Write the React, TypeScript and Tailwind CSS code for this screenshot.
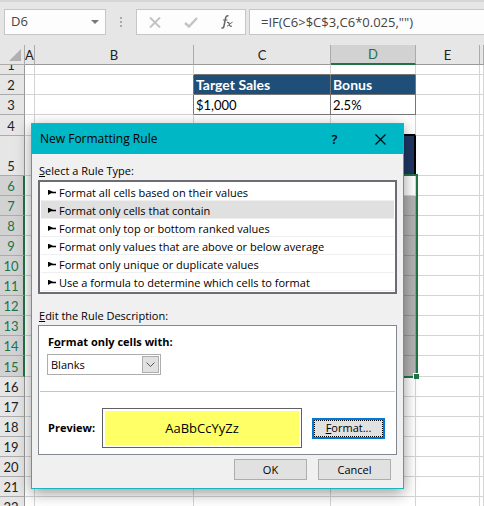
import type { ReactNode } from "react";

type RowSpec = { n: number; height: string };

const rows: RowSpec[] = [
  { n: 1, height: "h-[10px]" },
  { n: 2, height: "h-5" },
  { n: 3, height: "h-5" },
  { n: 4, height: "h-[21px]" },
  { n: 5, height: "h-10" },
  { n: 6, height: "h-5" },
  { n: 7, height: "h-5" },
  { n: 8, height: "h-5" },
  { n: 9, height: "h-5" },
  { n: 10, height: "h-5" },
  { n: 11, height: "h-5" },
  { n: 12, height: "h-5" },
  { n: 13, height: "h-5" },
  { n: 14, height: "h-5" },
  { n: 15, height: "h-[21px]" },
  { n: 16, height: "h-5" },
  { n: 17, height: "h-5" },
  { n: 18, height: "h-5" },
  { n: 19, height: "h-5" },
  { n: 20, height: "h-5" },
  { n: 21, height: "h-5" },
  { n: 22, height: "h-5" },
];

const columns = ["A", "B", "C", "D", "E", ""];

const ruleTypes = [
  "Format all cells based on their values",
  "Format only cells that contain",
  "Format only top or bottom ranked values",
  "Format only values that are above or below average",
  "Format only unique or duplicate values",
  "Use a formula to determine which cells to format",
];

const data: Record<string, string> = {
  C2: "Target Sales",
  D2: "Bonus",
  C3: "$1,000",
  D3: "2.5%",
};

function isSelected(n: number) {
  return n >= 6 && n <= 15;
}

function cellClass(col: string, n: number) {
  if (n === 1 && (col === "C" || col === "D")) return "border-r-[#d4d4d4] border-b-[#767676]";
  if (col === "B" && (n === 2 || n === 3)) return "border-r-[#767676] border-b-[#d4d4d4]";
  if (col === "C" || col === "D") {
    if (n === 2) return "border-[#767676] bg-[#1f4e78] text-[14px] leading-4 font-bold text-white";
    if (n === 3) return "border-[#767676]";
  }
  if (col === "D") {
    if (n === 4) return "border-b-2 border-r-[#d4d4d4] border-b-black";
    if (n === 5) return "border-r-2 border-r-black border-b-[#217346] bg-[#203764]";
    if (n > 6 && n <= 15) return "border-[#969696] bg-[#b4b4b4]";
  }
  return "border-[#d4d4d4]";
}

function FormulaBar() {
  return (
    <div className="flex items-center border-t-2 border-[#d6d6d6] pt-[7px] pb-[10px] pl-1 font-['Open_Sans',sans-serif] text-[13px] text-[#444]">
      <div className="flex h-[26px] w-[102px] items-center border border-[#c6c6c6] bg-[#fdfdfd]">
        <input aria-label="Name box" defaultValue="D6" className="w-20 bg-transparent pl-1.5 outline-none" />
        <button type="button" aria-label="Names" className="flex h-full flex-1 items-center justify-center">
          <svg width="8" height="4" viewBox="0 0 8 4" aria-hidden>
            <path d="M0 0h8L4 4z" fill="#777" />
          </svg>
        </button>
      </div>
      <svg className="mx-[14px]" width="2" height="10" viewBox="0 0 2 10" fill="#aaa" aria-hidden>
        <path d="M0 0h2v2H0zM0 4h2v2H0zM0 8h2v2H0z" />
      </svg>
      <div className="flex h-[26px] w-[110px] shrink-0 items-center justify-between border border-[#c6c6c6] bg-[#fdfdfd] px-3">
        <button type="button" aria-label="Cancel entry">
          <svg width="12" height="11" viewBox="0 0 12 11" fill="none" stroke="#c3c3c3" strokeWidth="2" aria-hidden>
            <path d="M1 .5l10 10M11 .5l-10 10" />
          </svg>
        </button>
        <button type="button" aria-label="Enter">
          <svg width="14" height="11" viewBox="0 0 14 11" fill="none" stroke="#c3c3c3" strokeWidth="2.4" aria-hidden>
            <path d="M1 6l4 3.5L13 1" />
          </svg>
        </button>
        <button type="button" aria-label="Insert function">
          <svg width="12" height="14" viewBox="0 0 12 14" fill="none" stroke="#666" aria-hidden>
            <path d="M7.5 1.2C6 .2 5 1.2 4.6 3L3 11c-.4 1.8-1.2 2.4-2.5 1.8" strokeWidth="1.5" />
            <path d="M2 5h4.5" />
            <path d="M6 7.5c1.5-.6 1.8.2 2.3 1.8.5 1.8 1 2.4 2.7 1.7" strokeWidth="1.3" />
            <path d="M11.5 7.3c-1.8 0-3.8 4-5.5 3.9" />
          </svg>
        </button>
      </div>
      <input
        aria-label="Formula"
        defaultValue={'=IF(C6>$C$3,C6*0.025,"")'}
        className="ml-[3px] h-[26px] min-w-0 flex-1 border border-r-0 border-[#c6c6c6] bg-[#fdfdfd] pl-[11px] outline-none"
      />
    </div>
  );
}

function Sheet() {
  return (
    <table className="w-full table-fixed border-separate border-spacing-0 font-[Lato,sans-serif] text-[13px] leading-4">
      <colgroup>
        <col className="w-[25px]" />
        <col className="w-[10px]" />
        <col className="w-[159px]" />
        <col className="w-[137px]" />
        <col className="w-[85px]" />
        <col className="w-16" />
        <col />
      </colgroup>
      <thead>
        <tr className="h-5">
          <th className="border-r border-b border-[#ababab] bg-[#e6e6e6] p-0">
            <svg className="ml-[9px]" width="12" height="12" viewBox="0 0 12 12" aria-hidden>
              <path d="M12 0v12H0z" fill="#b1b1b1" />
            </svg>
          </th>
          {columns.map((col) => (
            <th
              key={col}
              scope="col"
              className={
                col === "D"
                  ? "border-r border-b-2 border-r-[#ababab] border-b-[#217346] bg-[#d2d2d2] p-0 font-normal text-[#217346]"
                  : "border-r border-b border-r-[#ababab] border-b-[#999] bg-[#e6e6e6] p-0 font-normal text-[#222]"
              }
            >
              <span className="flex justify-center">{col}</span>
            </th>
          ))}
        </tr>
      </thead>
      <tbody>
        {rows.map(({ n, height }) => (
          <tr key={n} className={height}>
            <th
              scope="row"
              className={
                isSelected(n)
                  ? "border-r-2 border-b border-r-[#217346] border-b-[#ababab] bg-[#d2d2d2] p-0 pr-px align-bottom font-normal text-[#217346]"
                  : "border-r border-b border-r-[#999] border-b-[#ababab] bg-[#e6e6e6] p-0 pr-0.5 align-bottom font-normal text-[#222]"
              }
            >
              {n === 1 ? (
                <span className="flex h-[9px] items-end justify-center overflow-hidden pb-px">{n}</span>
              ) : (
                <span className="block pb-px">{n}</span>
              )}
            </th>
            {columns.map((col) => (
              <td key={col} className={`relative border-r border-b p-0 pl-0.5 ${cellClass(col, n)}`}>
                {data[col + n]}
                {col === "D" && n === 6 && (
                  <span className="absolute -top-0.5 -left-px z-10 h-[204px] w-[88px] border-2 border-[#217346]">
                    <span className="absolute -right-[3px] -bottom-[3px] size-1.5 border-t border-l border-white bg-[#217346]" />
                  </span>
                )}
              </td>
            ))}
          </tr>
        ))}
      </tbody>
    </table>
  );
}

function DialogButton({ children, focused = false }: { children: ReactNode; focused?: boolean }) {
  return (
    <button
      type="button"
      className={
        focused
          ? "h-[21px] w-[73px] border-2 border-[#0078d7] bg-[#e1e1e1] outline-1 -outline-offset-3 outline-black outline-dotted"
          : "h-[21px] w-[73px] border border-[#adadad] bg-[#e1e1e1]"
      }
    >
      {children}
    </button>
  );
}

function FormattingDialog() {
  return (
    <div
      role="dialog"
      aria-labelledby="dialog-title"
      className="absolute top-[123px] left-[31px] z-20 w-[373px] border border-[#1ab5bf] bg-[#f0f0f0] font-['Open_Sans',sans-serif] text-[11px] leading-4 text-black shadow-[0_4px_14px_rgba(0,0,0,0.4)]"
    >
      <div className="flex h-[30px] items-center bg-[#00b7c6] pl-2">
        <h1 id="dialog-title" className="flex-1 text-[12px]">
          New Formatting Rule
        </h1>
        <button type="button" aria-label="Help" className="w-[45px] text-[13px] font-semibold">
          ?
        </button>
        <button type="button" aria-label="Close" className="flex w-[46px] justify-center">
          <svg width="11" height="11" viewBox="0 0 11 11" fill="none" stroke="#000" strokeWidth="1.2" aria-hidden>
            <path d="M.5 .5l10 10M10.5 .5l-10 10" />
          </svg>
        </button>
      </div>

      <div className="px-1.5 pt-[9px] pb-2">
        <p className="pl-px">
          <u>S</u>elect a Rule Type:
        </p>
        <ul className="mt-px border-2 border-[#6d6b73] bg-white p-px">
          {ruleTypes.map((rule, i) => (
            <li key={rule} className="border-b border-[#efefef]">
              <button
                type="button"
                className={
                  i === 1
                    ? "flex h-[17px] w-full items-center bg-[#e0e0e1] pt-0.5 pl-[7px]"
                    : "flex h-[17px] w-full items-center pt-0.5 pl-[7px]"
                }
              >
                <svg className="mr-[3px]" width="8" height="5" viewBox="0 0 8 5" aria-hidden>
                  <path d="M0 0h1l4 1.7h3v1.5H3L0 5z" />
                </svg>
                {rule}
              </button>
            </li>
          ))}
        </ul>

        <p className="mt-[14px] pl-px">
          <u>E</u>dit the Rule Description:
        </p>
        <div className="mt-px border border-[#828790] bg-white">
          <div className="px-2 pt-2 pb-4">
            <label htmlFor="condition" className="block pl-px font-bold">
              F<u>o</u>rmat only cells with:
            </label>
            <div className="relative mt-1 h-[21px] w-[114px]">
              <select
                id="condition"
                className="h-full w-full appearance-none border border-[#adadad] bg-white pl-[3px] outline-none"
              >
                <option>Blanks</option>
                <option>No Blanks</option>
              </select>
              <span className="pointer-events-none absolute top-0.5 right-0.5 flex h-[17px] w-[17px] items-center justify-center border border-[#adadad] bg-[#e1e1e1]">
                <svg width="9" height="5" viewBox="0 0 9 5" fill="none" stroke="#555" aria-hidden>
                  <path d="M.5 .5l4 4 4-4" />
                </svg>
              </span>
            </div>
          </div>
          <div className="mx-px flex items-center border-t border-[#c4c4c4] pt-4 pr-[10px] pb-1.5 pl-2">
            <span className="w-[54px] font-bold">Preview:</span>
            <div className="h-10 flex-1 border border-[#606060] p-0.5">
              <div className="flex h-full items-center justify-center bg-[#ffff66] text-[13px]">AaBbCcYyZz</div>
            </div>
            <div className="ml-[10px] flex">
              <DialogButton focused>
                <u>F</u>ormat...
              </DialogButton>
            </div>
          </div>
        </div>

        <div className="mt-1 flex justify-end gap-[11px] pr-1.5">
          <DialogButton>OK</DialogButton>
          <DialogButton>Cancel</DialogButton>
        </div>
      </div>
    </div>
  );
}

export default function App() {
  return (
    <main className="relative h-screen overflow-hidden bg-[#e6e6e6]">
      <FormulaBar />
      <div className="bg-white">
        <Sheet />
      </div>
      <FormattingDialog />
    </main>
  );
}
